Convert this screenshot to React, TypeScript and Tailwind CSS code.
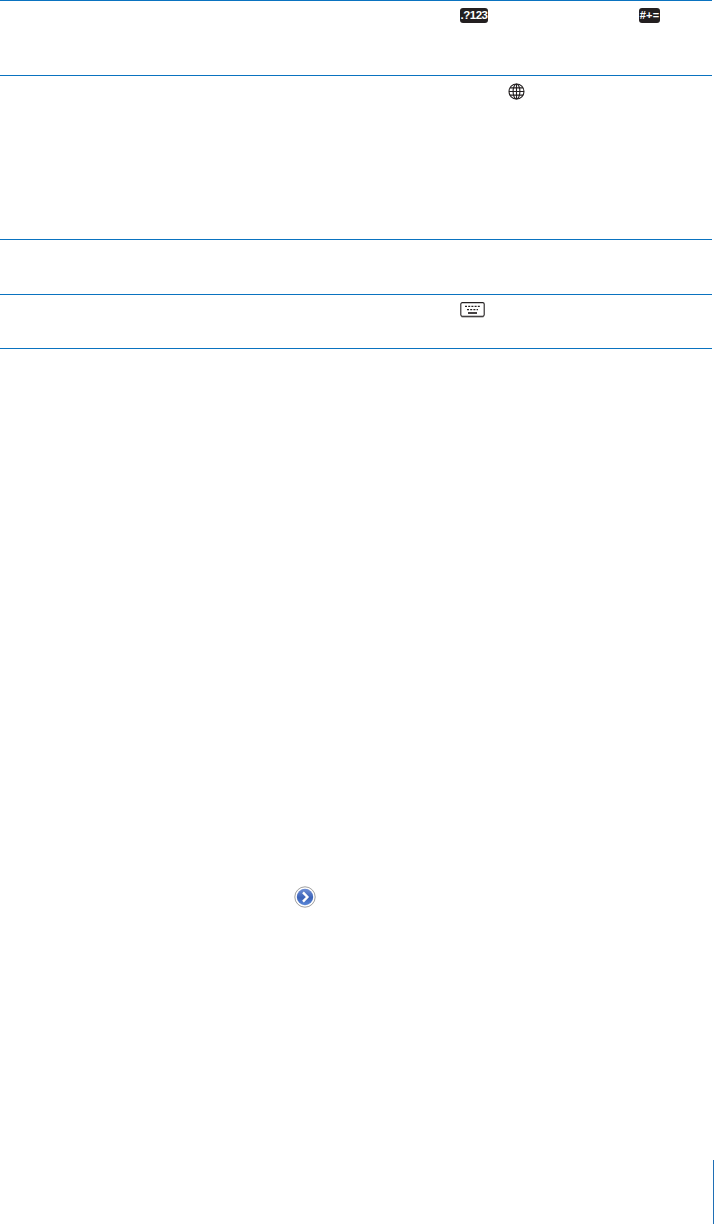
import React from 'react'

const KeyBadge = ({ label, className }: { label: string; className: string }) => (
  <span
    className={`flex h-[15px] items-center justify-center rounded-[3px] bg-[#231f20] font-['Liberation_Sans',sans-serif] leading-none font-bold whitespace-nowrap text-white ${className}`}
  >
    {label}
  </span>
)

const GlobeIcon = () => (
  <svg width="17" height="17" viewBox="0 0 17 17" fill="none" stroke="#231f20" strokeWidth="1.1">
    <circle cx="8.5" cy="8.5" r="7.5" />
    <ellipse cx="8.5" cy="8.5" rx="3.4" ry="7.5" />
    <path d="M8.5 1v15M1 8.5h15M2.1 4.9h12.8M2.1 12.1h12.8" />
  </svg>
)

const KeyboardIcon = () => (
  <svg width="25" height="16" viewBox="0 0 25 16" fill="none">
    <rect x="1" y="1.4" width="23" height="14" rx="1.5" fill="#8a8a8a" />
    <rect x="0.8" y="0.6" width="23.4" height="13.6" rx="1.5" fill="#fff" stroke="#231f20" strokeWidth="1.1" />
    <path d="M5 4.4h15.5M7 7.6h11" stroke="#231f20" strokeWidth="1.2" strokeDasharray="2 1.2" />
    <path d="M8 11h9" stroke="#231f20" strokeWidth="1.7" />
  </svg>
)

const ArrowButton = () => (
  <svg width="22" height="22" viewBox="0 0 22 22" fill="none">
    <defs>
      <linearGradient id="arrow-fill" x1="0" y1="0" x2="0" y2="1">
        <stop offset="0" stopColor="#6f8fd6" />
        <stop offset="0.55" stopColor="#3c63b8" />
        <stop offset="1" stopColor="#5a88d8" />
      </linearGradient>
    </defs>
    <circle cx="11" cy="11" r="10.2" fill="#fff" stroke="#a0a0a0" strokeWidth="1" />
    <circle cx="11" cy="11" r="8.2" fill="url(#arrow-fill)" />
    <path d="M9 6.4l4.4 4.6L9 15.6" stroke="#fff" strokeWidth="2.4" />
  </svg>
)

export default function App() {
  return (
    <div className="flex h-[1224px] w-[714px] flex-col overflow-hidden bg-white">
      <div className="w-[712px] border-t border-[#0a73c0]">
        <div className="flex h-[75px] items-start border-b border-[#0a73c0] pt-[7px] pl-[460px]">
          <KeyBadge label=".?123" className="w-[28px] text-[11.5px] tracking-[-0.5px]" />
          <KeyBadge label="#+=" className="ml-[151px] w-[21px] text-[11px] tracking-[0.2px]" />
        </div>
        <div className="h-[164px] border-b border-[#0a73c0] pt-[7px] pl-[508px]">
          <GlobeIcon />
        </div>
        <div className="h-[55px] border-b border-[#0a73c0]" />
        <div className="h-[54px] border-b border-[#0a73c0] pt-[7px] pl-[460px]">
          <KeyboardIcon />
        </div>
      </div>
      <div className="mt-[537px] pl-[294px]">
        <ArrowButton />
      </div>
      <div className="mt-auto flex justify-end">
        <div className="h-[64px] w-px bg-[#1f6fb5]" />
      </div>
    </div>
  )
}
